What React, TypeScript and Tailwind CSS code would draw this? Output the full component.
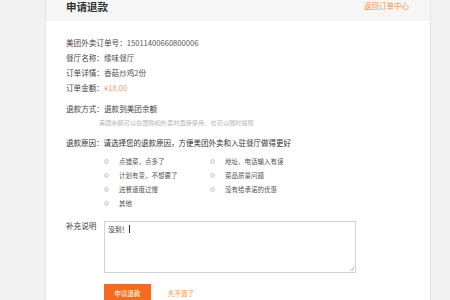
const font = { fontFamily: '"Noto Sans CJK SC", "Liberation Sans", sans-serif' }

const info = [
  { label: '美团外卖订单号：', value: '15011400660800006' },
  { label: '餐厅名称：', value: '缘味餐厅' },
  { label: '订单详情：', value: '香菇炒鸡2份' },
]

const reasons = [
  '点错菜，点多了',
  '地址、电话输入有误',
  '计划有变，不想要了',
  '菜品质量问题',
  '送餐速度过慢',
  '没有给承诺的优惠',
  '其他',
]

function Radio({ text }: { text: string }) {
  return (
    <div className="flex h-[14px] items-center">
      <span className="ml-[1px] h-[5px] w-[5px] shrink-0 rounded-full border border-[#d0d0d0] bg-[#ececec]" />
      <span className="ml-[10px] text-[6.5px] leading-[14px] text-[#555]">{text}</span>
    </div>
  )
}

export default function App() {
  return (
    <div
      className="flex h-[300px] w-[450px] overflow-hidden bg-[#f2f2f2] pl-[45px]"
      style={font}
    >
      <div className="flex w-[386px] shrink-0 flex-col border-x border-[#e4e4e4] bg-white">
        <div className="flex h-[21px] shrink-0 items-start justify-between bg-[#f6f6f6] pl-[20px] pr-[21px]">
          <h1 className="text-[10.5px] font-bold leading-[13px] text-[#333]">申请退款</h1>
          <a className="text-[7.5px] leading-[12px] text-[#f5923e]">返回订单中心</a>
        </div>

        <div className="flex flex-col pl-[20px] pt-[14px] text-[7.6px] leading-[15px] text-[#444]">
          {info.map(({ label, value }) => (
            <div key={label}>
              {label}
              <span className="text-[#555]">{value}</span>
            </div>
          ))}
          <div>
            订单金额：<span className="text-[#f9a15f]">¥18.00</span>
          </div>

          <div className="mt-[6px]">退款方式：退款到美团余额</div>
          <div className="mt-[2px] pl-[33px] text-[6.2px] leading-[10px] text-[#b5b5b5]">
            美团余额可以在团购和外卖时直接使用，也可以随时提现
          </div>

          <div className="mt-[7px] text-[7.5px] text-[#333]">
            退款原因：请选择您的退款原因，方便美团外卖和入驻餐厅做得更好
          </div>
          <div className="ml-[37px] mt-[4px] grid grid-cols-[106px_1fr]">
            {reasons.map((r) => (
              <Radio key={r} text={r} />
            ))}
          </div>

          <div className="mt-[11px] flex">
            <div className="w-[38px] shrink-0 leading-[10px]">补充说明</div>
            <div className="relative h-[52px] w-[252px] border border-[#d2d2d2] px-[3px] pt-[2px] text-[6.8px] leading-[10px] text-[#333]">
              没到！<span className="ml-[1px] inline-block h-[8px] w-px translate-y-[1px] bg-[#333]" />
              <svg className="absolute bottom-[1px] right-[1px]" width="5" height="5" viewBox="0 0 5 5">
                <path d="M1 5L5 1M3 5L5 3" stroke="#aaa" strokeWidth="0.8" />
              </svg>
            </div>
          </div>

          <div className="ml-[38px] mt-[11px] flex items-center">
            <button className="h-[18px] w-[47px] bg-[#f56c1f] text-[6.5px] text-white">申请退款</button>
            <a className="ml-[17px] text-[6.5px] text-[#f5923e]">先不退了</a>
          </div>
        </div>
      </div>
    </div>
  )
}
